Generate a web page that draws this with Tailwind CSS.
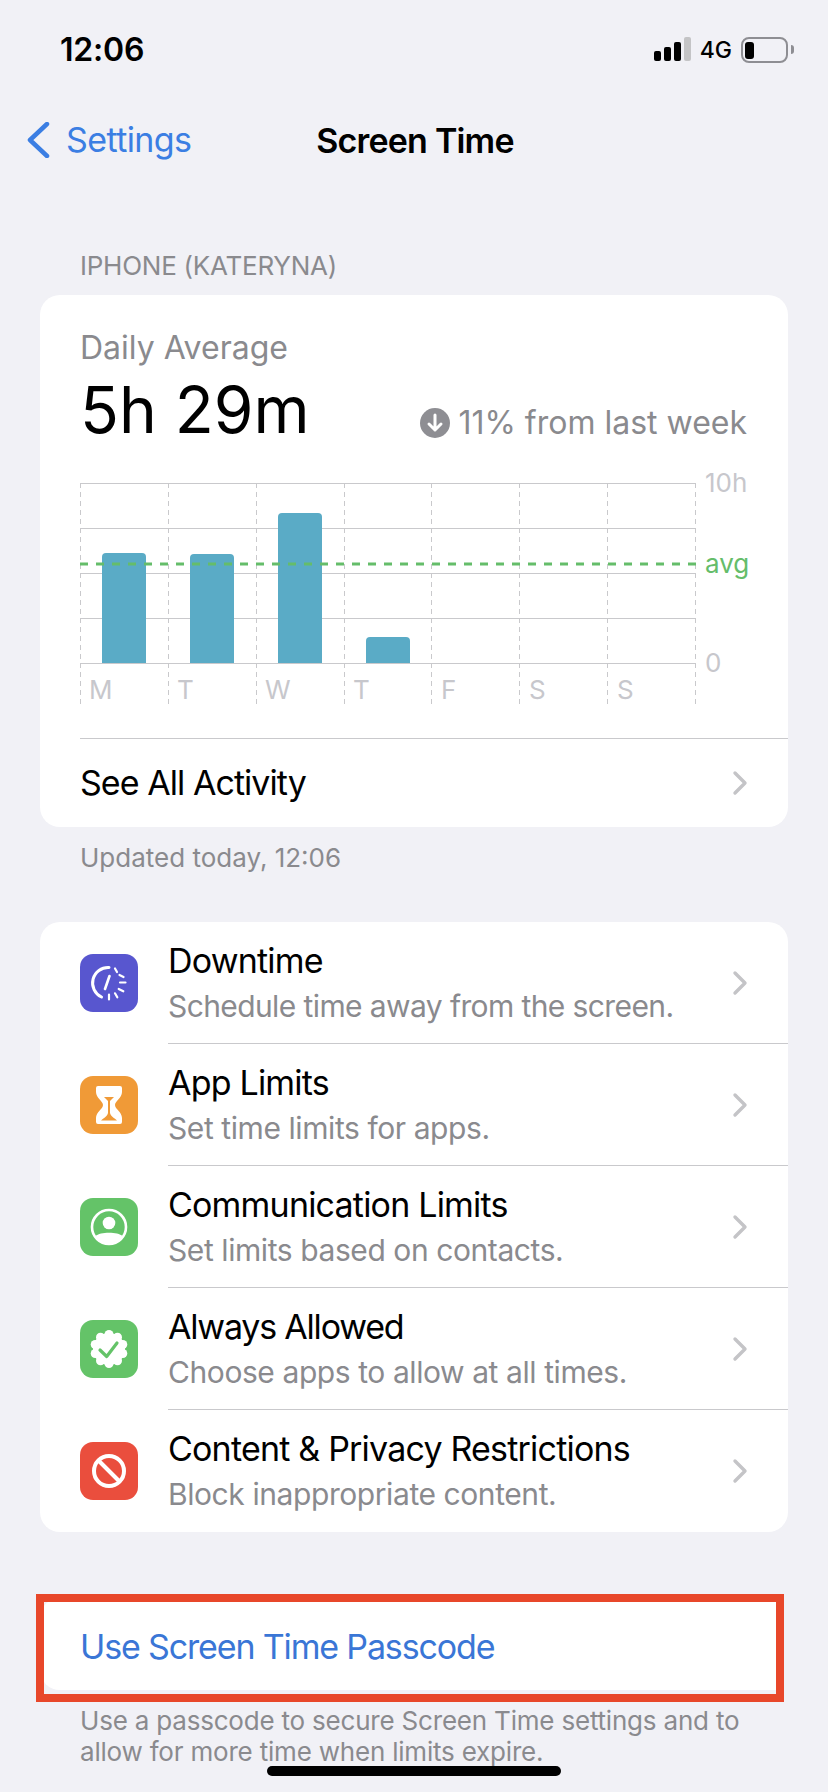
<!DOCTYPE html>
<html lang="en">
  <head>
    <meta charset="UTF-8" />
    <meta name="viewport" content="width=device-width, initial-scale=1.0" />
    <title>Screen Time</title>
    <script src="https://cdn.jsdelivr.net/npm/@tailwindcss/browser@4"></script>
  </head>
  <body class="relative h-[1792px] w-[828px] overflow-hidden bg-[#f1f1f6] font-['Inter',sans-serif] text-black">
    <!-- Status bar -->
    <div class="relative h-[100px]">
      <div class="flex h-[100px] items-center justify-between pl-[60px] pr-[40px]">
        <span class="text-[32px] font-semibold tracking-[-0.2px]">12:06</span>
        <div class="flex items-center">
          <svg width="38" height="24" viewBox="0 0 38 24" class="mt-[-2px]">
            <rect x="0" y="14" width="7" height="10" rx="2" fill="#000" />
            <rect x="10" y="10" width="7" height="14" rx="2" fill="#000" />
            <rect x="20" y="5" width="7" height="19" rx="2" fill="#000" />
            <rect x="30" y="0" width="7" height="24" rx="2" fill="#c4c4c6" />
          </svg>
          <span class="ml-[8px] text-[23px] font-medium">4G</span>
          <div class="relative ml-[9px] flex h-[26px] w-[47px] items-center rounded-[8px] border-2 border-[#8e8e93] pl-[2px]">
            <div class="h-[17px] w-[9px] rounded-[3px] bg-black"></div>
            <div class="absolute right-[-8px] top-[6px] h-[9px] w-[3px] rounded-r-full bg-[#8e8e93]"></div>
          </div>
        </div>
      </div>
    </div>

    <!-- Nav -->
    <div class="relative flex h-[80px] items-center justify-center">
      <div class="absolute left-[26px] top-[22px] flex items-center text-[#3b7ee3]">
        <svg width="24" height="36" viewBox="0 0 24 36" fill="none">
          <path d="M21 2 L4 18 L21 34" stroke="currentColor" stroke-width="4.5" stroke-linecap="round" stroke-linejoin="round" />
        </svg>
        <span class="ml-[16px] text-[34px] leading-[36px] tracking-[-0.6px]">Settings</span>
      </div>
      <span class="pl-[2px] text-[34px] font-semibold tracking-[-0.8px]">Screen Time</span>
    </div>

    <!-- Section header -->
    <div class="mt-[70px] h-[31px] pl-[80px] text-[26px] leading-[31px] tracking-[-0.25px] text-[#8a8a8e]">IPHONE (KATERYNA)</div>

    <!-- Activity card -->
    <div class="mx-[40px] mt-[14px] h-[532px] rounded-[20px] bg-white">
      <div class="pl-[40px] pt-[34px] text-[32px] leading-[38px] text-[#8a8a8e]">Daily Average</div>
      <div class="mt-[5px] flex items-end justify-between pl-[40px] pr-[41px]">
        <span class="text-[64px] leading-[76px]">5h 29m</span>
        <div class="mb-[6px] flex items-center gap-[8px]">
          <svg width="30" height="30" viewBox="0 0 30 30">
            <circle cx="15" cy="15" r="15" fill="#8e8e93" />
            <path d="M15 7 V22 M9 16 L15 22 L21 16" stroke="#fff" stroke-width="3" fill="none" stroke-linecap="round" stroke-linejoin="round" />
          </svg>
          <span class="text-[32px] leading-[38px] text-[#8a8a8e]">11% from last week</span>
        </div>
      </div>

      <!-- Chart -->
      <div class="relative ml-[40px] mt-[35px] h-[221px] w-[700px]">
        <svg width="640" height="221" viewBox="0 0 640 221" class="absolute left-0 top-0">
          <g stroke="#c9c9cc" stroke-width="1">
            <line x1="0" y1="0.5" x2="616" y2="0.5" />
            <line x1="0" y1="45.5" x2="616" y2="45.5" />
            <line x1="0" y1="90.5" x2="616" y2="90.5" />
            <line x1="0" y1="135.5" x2="616" y2="135.5" />
            <line x1="0" y1="180.5" x2="616" y2="180.5" />
          </g>
          <g stroke="#c9c9cc" stroke-width="1" stroke-dasharray="5 4">
            <line x1="0.5" y1="0" x2="0.5" y2="221" />
            <line x1="88.5" y1="0" x2="88.5" y2="221" />
            <line x1="176.5" y1="0" x2="176.5" y2="221" />
            <line x1="264.5" y1="0" x2="264.5" y2="221" />
            <line x1="351.5" y1="0" x2="351.5" y2="221" />
            <line x1="439.5" y1="0" x2="439.5" y2="221" />
            <line x1="527.5" y1="0" x2="527.5" y2="221" />
            <line x1="615.5" y1="0" x2="615.5" y2="221" />
          </g>
          <g fill="#5aabc6">
            <path d="M22 180 V74 a4 4 0 0 1 4 -4 H62 a4 4 0 0 1 4 4 V180 Z" />
            <path d="M110 180 V75 a4 4 0 0 1 4 -4 H150 a4 4 0 0 1 4 4 V180 Z" />
            <path d="M198 180 V34 a4 4 0 0 1 4 -4 H238 a4 4 0 0 1 4 4 V180 Z" />
            <path d="M286 180 V158 a4 4 0 0 1 4 -4 H326 a4 4 0 0 1 4 4 V180 Z" />
          </g>
          <line x1="0" y1="81" x2="616" y2="81" stroke="#65bd6a" stroke-width="3" stroke-dasharray="8 8" />
        </svg>
        <span class="absolute left-[625px] top-[-17px] text-[26px] leading-[34px] text-[#c7c7cc]">10h</span>
        <span class="absolute left-[625px] top-[64px] text-[26px] leading-[34px] text-[#65bd6a]">avg</span>
        <span class="absolute left-[625px] top-[163px] text-[26px] leading-[34px] text-[#c7c7cc]">0</span>
        <div class="absolute left-0 top-[190px] grid w-[625px] grid-cols-7 pl-[9px] text-[26px] leading-[34px] text-[#c7c7cc]">
          <span>M</span><span>T</span><span>W</span><span>T</span><span>F</span><span>S</span><span>S</span>
        </div>
      </div>

      <!-- See all -->
      <div class="ml-[40px] mt-[34px] flex h-[88px] items-center justify-between border-t border-[#c9c9cc] pr-[40px]">
        <span class="text-[34px] tracking-[-0.95px]">See All Activity</span>
        <svg width="16" height="26" viewBox="0 0 16 26" fill="none"><path d="M3 3 L13 13 L3 23" stroke="#c4c4c7" stroke-width="3.4" stroke-linecap="round" stroke-linejoin="round" /></svg>
      </div>
    </div>
    <div class="mt-[15px] pl-[80px] text-[26px] leading-[31px] text-[#8a8a8e]">Updated today, 12:06</div>

    <!-- Settings list -->
    <div class="mx-[40px] mt-[49px] rounded-[20px] bg-white pb-[1px]">
      <div class="flex h-[121px] items-center pl-[40px]">
        <div class="mt-[1px] flex h-[58px] w-[58px] shrink-0 items-center justify-center rounded-[13px] bg-[#5856cf]">
          <svg width="58" height="58" viewBox="0 0 58 58" fill="none" stroke="#fff" stroke-linecap="round">
            <path d="M29 13.5 A15.5 15.5 0 0 0 21.5 43" stroke-width="3" />
            <path d="M29.5 22 L25 35" stroke-width="2.6" />
            <path d="M35 14.5 L37 18 M39.5 21 L43.5 23 M40 28.5 H45.5 M38.7 35 L43.3 37.3 M35 39.3 L37.3 43.3 M29 40.5 V45.5" stroke-width="2.2" />
          </svg>
        </div>
        <div class="ml-[30px] flex h-full flex-1 items-center justify-between pr-[40px]">
          <div>
            <div class="text-[34px] leading-[40px] tracking-[-0.8px]">Downtime</div>
            <div class="mt-[6px] text-[30px] leading-[38px] tracking-[-0.6px] text-[#8a8a8e]">Schedule time away from the screen.</div>
          </div>
          <svg width="16" height="26" viewBox="0 0 16 26" fill="none"><path d="M3 3 L13 13 L3 23" stroke="#c4c4c7" stroke-width="3.4" stroke-linecap="round" stroke-linejoin="round" /></svg>
        </div>
      </div>
      <div class="flex h-[122px] items-center pl-[40px]">
        <div class="mt-[2px] flex h-[58px] w-[58px] shrink-0 items-center justify-center rounded-[13px] bg-[#f09a37]">
          <svg width="58" height="58" viewBox="0 0 58 58">
            <path d="M18 10 H40 Q42 10 42 12 V16 C42 22 35 25 35 29 C35 33 42 36 42 42 V46 Q42 48 40 48 H18 Q16 48 16 46 V42 C16 36 23 33 23 29 C23 25 16 22 16 16 V12 Q16 10 18 10 Z" fill="#fff" />
            <path d="M24 21 H34 L30 25 V37 C31 41 36 43 37 44.5 H21 C22 43 27 41 28 37 V25 Z" fill="#f09a37" />
          </svg>
        </div>
        <div class="ml-[30px] flex h-full flex-1 items-center justify-between border-t border-[#c9c9cc] pr-[40px]">
          <div>
            <div class="text-[34px] leading-[40px] tracking-[-0.8px]">App Limits</div>
            <div class="mt-[6px] text-[30px] leading-[38px] tracking-[-0.42px] text-[#8a8a8e]">Set time limits for apps.</div>
          </div>
          <svg width="16" height="26" viewBox="0 0 16 26" fill="none"><path d="M3 3 L13 13 L3 23" stroke="#c4c4c7" stroke-width="3.4" stroke-linecap="round" stroke-linejoin="round" /></svg>
        </div>
      </div>
      <div class="flex h-[122px] items-center pl-[40px]">
        <div class="mt-[2px] flex h-[58px] w-[58px] shrink-0 items-center justify-center rounded-[13px] bg-[#64c368]">
          <svg width="58" height="58" viewBox="0 0 58 58">
            <circle cx="29" cy="29" r="17" fill="none" stroke="#fff" stroke-width="2.6" />
            <circle cx="29" cy="25" r="6.3" fill="#fff" />
            <path d="M15.5 38 C20 33.5 38 33.5 42.5 38 C39 43 34 46 29 46 C24 46 19 43 15.5 38 Z" fill="#fff" />
          </svg>
        </div>
        <div class="ml-[30px] flex h-full flex-1 items-center justify-between border-t border-[#c9c9cc] pr-[40px]">
          <div>
            <div class="text-[34px] leading-[40px] tracking-[-0.8px]">Communication Limits</div>
            <div class="mt-[6px] text-[30px] leading-[38px] tracking-[-0.42px] text-[#8a8a8e]">Set limits based on contacts.</div>
          </div>
          <svg width="16" height="26" viewBox="0 0 16 26" fill="none"><path d="M3 3 L13 13 L3 23" stroke="#c4c4c7" stroke-width="3.4" stroke-linecap="round" stroke-linejoin="round" /></svg>
        </div>
      </div>
      <div class="flex h-[122px] items-center pl-[40px]">
        <div class="mt-[2px] flex h-[58px] w-[58px] shrink-0 items-center justify-center rounded-[13px] bg-[#64c368]">
          <svg width="58" height="58" viewBox="0 0 58 58">
            <g fill="#fff">
              <circle cx="29" cy="29" r="16" />
              <circle cx="29" cy="14.5" r="4.5" /><circle cx="37.5" cy="17.3" r="4.5" /><circle cx="42.8" cy="24.5" r="4.5" />
              <circle cx="42.8" cy="33.5" r="4.5" /><circle cx="37.5" cy="40.7" r="4.5" /><circle cx="29" cy="43.5" r="4.5" />
              <circle cx="20.5" cy="40.7" r="4.5" /><circle cx="15.2" cy="33.5" r="4.5" /><circle cx="15.2" cy="24.5" r="4.5" />
              <circle cx="20.5" cy="17.3" r="4.5" />
            </g>
            <path d="M20 30 L26.7 36.5 L37 23" fill="none" stroke="#64c368" stroke-width="3.2" stroke-linecap="round" stroke-linejoin="round" />
          </svg>
        </div>
        <div class="ml-[30px] flex h-full flex-1 items-center justify-between border-t border-[#c9c9cc] pr-[40px]">
          <div>
            <div class="text-[34px] leading-[40px] tracking-[-1.2px]">Always Allowed</div>
            <div class="mt-[6px] text-[30px] leading-[38px] tracking-[-0.42px] text-[#8a8a8e]">Choose apps to allow at all times.</div>
          </div>
          <svg width="16" height="26" viewBox="0 0 16 26" fill="none"><path d="M3 3 L13 13 L3 23" stroke="#c4c4c7" stroke-width="3.4" stroke-linecap="round" stroke-linejoin="round" /></svg>
        </div>
      </div>
      <div class="flex h-[122px] items-center pl-[40px]">
        <div class="mt-[2px] flex h-[58px] w-[58px] shrink-0 items-center justify-center rounded-[13px] bg-[#ea4e3d]">
          <svg width="58" height="58" viewBox="0 0 58 58" fill="none" stroke="#fff" stroke-width="4">
            <circle cx="29" cy="29" r="15" />
            <line x1="18.5" y1="18.5" x2="39.5" y2="39.5" />
          </svg>
        </div>
        <div class="ml-[30px] flex h-full flex-1 items-center justify-between border-t border-[#c9c9cc] pr-[40px]">
          <div>
            <div class="text-[34px] leading-[40px] tracking-[-0.8px]">Content &amp; Privacy Restrictions</div>
            <div class="mt-[6px] text-[30px] leading-[38px] tracking-[-0.42px] text-[#8a8a8e]">Block inappropriate content.</div>
          </div>
          <svg width="16" height="26" viewBox="0 0 16 26" fill="none"><path d="M3 3 L13 13 L3 23" stroke="#c4c4c7" stroke-width="3.4" stroke-linecap="round" stroke-linejoin="round" /></svg>
        </div>
      </div>
    </div>

    <!-- Passcode -->
    <div class="relative ml-[40px] mt-[66px] flex h-[92px] w-[740px] items-center rounded-l-[20px] bg-white pl-[40px] pt-[4px] text-[34px] tracking-[-1.15px] text-[#3a76d6]">
      Use Screen Time Passcode
      <div class="absolute left-[-4px] top-[-4px] h-[108px] w-[748px] border-[8px] border-[#e8472a]"></div>
    </div>
    <div class="mt-[15px] pl-[80px] pr-[60px] text-[26px] leading-[31px] tracking-[-0.2px] text-[#8a8a8e]">Use a passcode to secure Screen Time settings and to allow for more time when limits expire.</div>

    <!-- Home indicator -->
    <div class="absolute bottom-[16px] left-[267px] h-[10px] w-[294px] rounded-full bg-black"></div>
  </body>
</html>
